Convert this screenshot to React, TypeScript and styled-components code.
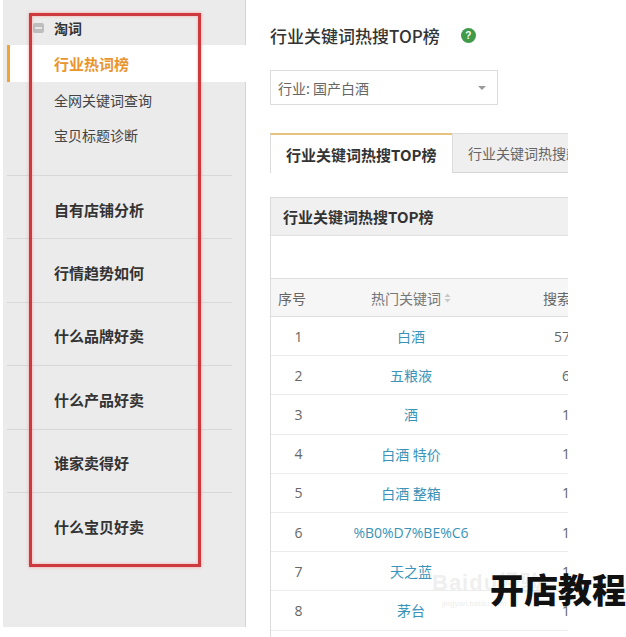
import React from "react";
import styled, { createGlobalStyle } from "styled-components";

const CJK = `"Noto Sans CJK SC", "Noto Sans", sans-serif`;

const Global = createGlobalStyle`
  html, body { margin: 0; padding: 0; background: #fff; }
  body { font-family: ${CJK}; }
  * { box-sizing: border-box; }
`;

const Page = styled.div`
  position: relative;
  width: 626px;
  height: 637px;
  overflow: hidden;
  display: flex;
  align-items: flex-start;
  background: #fff;
`;

/* ---------- Sidebar ---------- */
const Sidebar = styled.nav`
  margin-left: 3px;
  width: 243px;
  height: 627px;
  background: #ebebeb;
  border-right: 1px solid #d4d4d4;
  display: flex;
  flex-direction: column;
`;

const SectionHead = styled.div`
  height: 45px;
  padding: 10px 0 0 30px;
  display: flex;
  align-items: center;
  gap: 10px;
  font-size: 14px;
  font-weight: 700;
  color: #333;
`;

const Collapse = styled.span`
  width: 11px;
  height: 10px;
  border-radius: 2px;
  background: #bdbdbd;
  display: flex;
  align-items: center;
  justify-content: center;
  &::after {
    content: "";
    width: 7px;
    height: 2px;
    background: #e6e6e6;
  }
`;

const SubItem = styled.div<{ $active?: boolean }>`
  height: ${(p) => (p.$active ? 37 : 35)}px;
  display: flex;
  align-items: center;
  font-size: ${(p) => (p.$active ? 15 : 14)}px;
  font-weight: ${(p) => (p.$active ? 700 : 400)};
  color: ${(p) => (p.$active ? "#ea952c" : "#444")};
  padding-left: ${(p) => (p.$active ? 44 : 51)}px;
  margin-left: ${(p) => (p.$active ? 4 : 0)}px;
  margin-right: ${(p) => (p.$active ? -1 : 0)}px;
  background: ${(p) => (p.$active ? "#fff" : "transparent")};
  border-left: ${(p) => (p.$active ? "3px solid #f0a234" : "none")};
`;

const SubList = styled.div`
  padding-bottom: 23px;
`;

const Group = styled.div`
  height: 63.4px;
  margin: 0 13px 0 4px;
  padding: 4px 0 0 47px;
  border-top: 1px solid #d8d8d8;
  display: flex;
  align-items: center;
  font-size: 15px;
  font-weight: 700;
  color: #333;
`;

/* ---------- Main ---------- */
const Main = styled.main`
  width: 298px;
  margin-left: 24px;
  padding-top: 23px;
  height: 637px;
  overflow: hidden;
  display: flex;
  flex-direction: column;
`;

const Title = styled.h1`
  margin: 0;
  height: 24px;
  display: flex;
  align-items: center;
  gap: 21px;
  font-size: 17px;
  font-weight: 500;
  color: #333;
  white-space: nowrap;
`;

const Help = styled.span`
  width: 15px;
  height: 15px;
  border-radius: 50%;
  background: #3f9a4a;
  color: #fff;
  font: 700 10px/15px "Liberation Sans", Arial, sans-serif;
  text-align: center;
`;

const Select = styled.div`
  margin-top: 23px;
  width: 228px;
  height: 35px;
  border: 1px solid #dcdcdc;
  display: flex;
  align-items: center;
  justify-content: space-between;
  padding: 0 11px 0 7px;
  font-size: 14px;
  color: #666;
`;

const Caret = styled.span`
  width: 0;
  height: 0;
  border-left: 4px solid transparent;
  border-right: 4px solid transparent;
  border-top: 4px solid #9a9a9a;
`;

const Tabs = styled.div`
  margin-top: 28px;
  height: 40px;
  display: flex;
  width: 400px;
`;

const Tab = styled.div<{ $active?: boolean }>`
  flex: none;
  width: ${(p) => (p.$active ? "182px" : "auto")};
  padding: ${(p) => (p.$active ? "0 0 0 15px" : "0 40px 0 15px")};
  display: flex;
  align-items: center;
  white-space: nowrap;
  font-size: ${(p) => (p.$active ? 15 : 14)}px;
  font-weight: ${(p) => (p.$active ? 700 : 400)};
  color: ${(p) => (p.$active ? "#333" : "#666")};
  background: ${(p) => (p.$active ? "#fff" : "#efefef")};
  border-top: ${(p) => (p.$active ? "2px solid #e5c37e" : "1px solid #dcdcdc")};
  border-left: 1px solid #dcdcdc;
  border-bottom: ${(p) => (p.$active ? "none" : "1px solid #d6d6d6")};
`;

const Panel = styled.section`
  margin-top: 24px;
  width: 400px;
  flex: 1;
  border-top: 1px solid #dcdcdc;
  border-left: 1px solid #dcdcdc;
  display: flex;
  flex-direction: column;
`;

const PanelHead = styled.div`
  height: 38px;
  background: #f0f0f0;
  border-bottom: 1px solid #e2e2e2;
  display: flex;
  align-items: center;
  padding-left: 12px;
  font-size: 15px;
  font-weight: 700;
  color: #333;
`;

const Spacer = styled.div`
  height: 42px;
`;

const Table = styled.div`
  width: 385px;
  display: flex;
  flex-direction: column;
`;

const Row = styled.div<{ $head?: boolean }>`
  height: ${(p) => (p.$head ? 39 : 39.2)}px;
  display: grid;
  grid-template-columns: 55px 170px 160px;
  align-items: center;
  background: ${(p) => (p.$head ? "#f6f6f6" : "#fff")};
  border-top: ${(p) => (p.$head ? "1px solid #dedede" : "none")};
  border-bottom: 1px solid ${(p) => (p.$head ? "#dedede" : "#ececec")};
  font-size: 14px;
  color: #666;
  white-space: nowrap;
`;

const IndexCell = styled.span<{ $head?: boolean }>`
  text-align: ${(p) => (p.$head ? "left" : "center")};
  padding-left: ${(p) => (p.$head ? 7 : 0)}px;
  font-family: ${(p) => (p.$head ? CJK : `"Open Sans", ${CJK}`)};
`;

const KeyCell = styled.span<{ $head?: boolean }>`
  text-align: center;
  color: ${(p) => (p.$head ? "#777" : "#3a93b8")};
  font-family: "Open Sans", ${CJK};
  display: flex;
  justify-content: center;
  align-items: center;
  gap: 3px;
`;

const NumCell = styled.span<{ $head?: boolean }>`
  font-family: "Open Sans", ${CJK};
  color: #666;
  display: flex;
  justify-content: center;
  align-items: center;
  gap: 3px;
  padding-left: ${(p) => (p.$head ? 0 : 4)}px;
`;

const Sort = () => (
  <svg width="7" height="10" viewBox="0 0 7 10">
    <path d="M3.5 0.5 L6.5 4 H0.5 Z" fill="#c8c8c8" />
    <path d="M3.5 9.5 L6.5 6 H0.5 Z" fill="#c8c8c8" />
  </svg>
);

/* ---------- Overlays ---------- */
const Annotation = styled.div`
  position: absolute;
  left: 29px;
  top: 13px;
  width: 172px;
  height: 554px;
  border: 3px solid #cc3a3e;
  box-shadow: 0 0 3px rgba(255, 120, 120, 0.7), inset 0 0 3px rgba(255, 120, 120, 0.6);
  pointer-events: none;
`;

const Watermark = styled.div`
  position: absolute;
  left: 432px;
  top: 572px;
  color: rgba(200, 200, 200, 0.3);
  font: 700 22px/1 "Liberation Sans", Arial, sans-serif;
  letter-spacing: 1px;
  pointer-events: none;
`;

const WatermarkUrl = styled.div`
  position: absolute;
  left: 442px;
  top: 600px;
  color: rgba(200, 200, 200, 0.35);
  font: 8px/1 "Liberation Sans", Arial, sans-serif;
  pointer-events: none;
`;

const Brand = styled.div`
  position: absolute;
  left: 490px;
  top: 566px;
  font-family: ${CJK};
  font-weight: 900;
  font-size: 34px;
  line-height: 46px;
  color: #111;
  white-space: nowrap;
`;

const groups = ["自有店铺分析", "行情趋势如何", "什么品牌好卖", "什么产品好卖", "谁家卖得好", "什么宝贝好卖"];

const rows = [
  ["1", "白酒", "573415"],
  ["2", "五粮液", "6421"],
  ["3", "酒", "1983"],
  ["4", "白酒 特价", "1627"],
  ["5", "白酒 整箱", "1409"],
  ["6", "%B0%D7%BE%C6", "1288"],
  ["7", "天之蓝", "1156"],
  ["8", "茅台", "1042"],
];

export default function App() {
  return (
    <>
      <Global />
      <Page>
        <Sidebar>
          <SectionHead>
            <Collapse />
            淘词
          </SectionHead>
          <SubList>
            <SubItem $active>行业热词榜</SubItem>
            <SubItem>全网关键词查询</SubItem>
            <SubItem>宝贝标题诊断</SubItem>
          </SubList>
          {groups.map((g) => (
            <Group key={g}>{g}</Group>
          ))}
        </Sidebar>
        <Main>
          <Title>
            行业关键词热搜TOP榜
            <Help>?</Help>
          </Title>
          <Select>
            行业: 国产白酒
            <Caret />
          </Select>
          <Tabs>
            <Tab $active>行业关键词热搜TOP榜</Tab>
            <Tab>行业关键词热搜飙升榜</Tab>
          </Tabs>
          <Panel>
            <PanelHead>行业关键词热搜TOP榜</PanelHead>
            <Spacer />
            <Table>
              <Row $head>
                <IndexCell $head>序号</IndexCell>
                <KeyCell $head>
                  热门关键词
                  <Sort />
                </KeyCell>
                <NumCell $head>
                  搜索人气
                  <Sort />
                </NumCell>
              </Row>
              {rows.map(([i, k, n]) => (
                <Row key={i}>
                  <IndexCell>{i}</IndexCell>
                  <KeyCell>{k}</KeyCell>
                  <NumCell>{n}</NumCell>
                </Row>
              ))}
            </Table>
          </Panel>
        </Main>
        <Annotation />
        <Watermark>Baidu经验</Watermark>
        <WatermarkUrl>jingyan.baidu.com</WatermarkUrl>
        <Brand>开店教程</Brand>
      </Page>
    </>
  );
}
